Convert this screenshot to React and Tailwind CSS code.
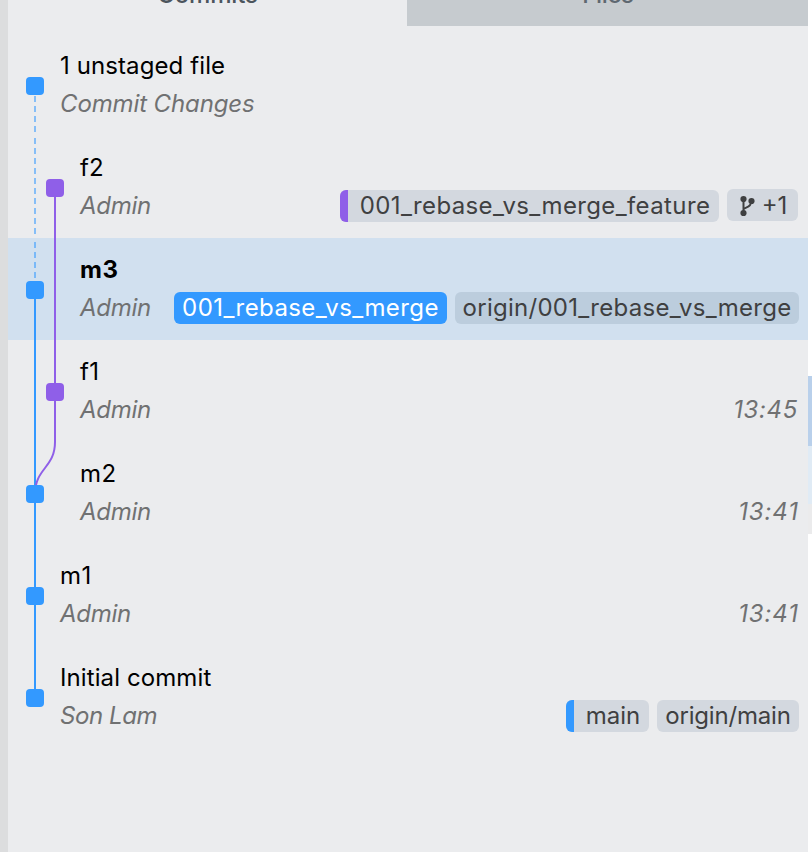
import React from "react";

const BLUE = "#3399ff";
const PURPLE = "#8f5fe8";

const commits = [
  { title: "1 unstaged file", titleClass: "tracking-[0.1px]", author: "Commit Changes", authorClass: "tracking-[-0.12px]", indent: "pl-[52px]" },
  {
    title: "f2",
    author: "Admin",
    indent: "pl-[72px]",
    refs: [
      { label: "001_rebase_vs_merge_feature", box: "w-[379px] tracking-[0.38px] bg-[#d3d8df]", bar: "bg-[#8f5fe8]", color: "text-[#3f4041]" },
      { label: "+1", box: "w-[71px] mr-px -translate-y-px bg-[#d3d8df]", icon: true, color: "text-[#3f4041]" },
    ],
  },
  {
    title: "m3",
    titleClass: "font-bold tracking-[0.5px]",
    author: "Admin",
    indent: "pl-[72px]",
    selected: true,
    refs: [
      { label: "001_rebase_vs_merge", box: "w-[273px] tracking-[0.42px] bg-[#3399ff]", color: "text-white" },
      { label: "origin/001_rebase_vs_merge", box: "w-[344px] tracking-[0.27px] bg-[#bccddd]", color: "text-[#3f4041]" },
    ],
  },
  { title: "f1", titleClass: "tracking-[0.4px]", author: "Admin", indent: "pl-[72px]", time: "13:45", timeClass: "tracking-[0.65px] mr-px" },
  { title: "m2", titleClass: "tracking-[0.4px]", author: "Admin", indent: "pl-[72px]", time: "13:41", timeClass: "tracking-[0.9px]" },
  { title: "m1", titleClass: "tracking-[1.5px]", author: "Admin", indent: "pl-[52px]", time: "13:41", timeClass: "tracking-[0.9px]" },
  {
    title: "Initial commit",
    titleClass: "tracking-[0.1px]",
    author: "Son Lam",
    authorClass: "tracking-[-0.42px]",
    indent: "pl-[52px]",
    refs: [
      { label: "main", box: "w-[83px] bg-[#d3d8df]", bar: "bg-[#3399ff]", color: "text-[#3f4041]" },
      { label: "origin/main", box: "w-[142px] tracking-[-0.18px] bg-[#d3d8df]", color: "text-[#3f4041]" },
    ],
  },
];

function BranchIcon() {
  return (
    <svg width="16" height="22" viewBox="0 0 16 22" fill="none" className="shrink-0 translate-x-[0.5px] translate-y-px">
      <path d="M4 4V18M4 14.2C6 12 11.6 12.8 12 6" stroke="#3f4041" strokeWidth="2" />
      <circle cx="4" cy="4" r="3.1" fill="#3f4041" />
      <circle cx="12" cy="6" r="3.1" fill="#3f4041" />
      <circle cx="4" cy="18" r="3.1" fill="#3f4041" />
    </svg>
  );
}

function RefTag({ tag }) {
  return (
    <div className={`flex h-8 shrink-0 items-center overflow-hidden rounded-[6px] ${tag.box} ${tag.color}`}>
      {tag.bar && <div className={`h-full w-2 shrink-0 ${tag.bar}`} />}
      <div className={`flex flex-1 items-center justify-center whitespace-nowrap leading-8 ${tag.icon ? "gap-[7px] pl-px" : ""}`}>
        {tag.icon && <BranchIcon />}
        <span className={tag.bar ? "pl-[3px]" : tag.icon ? "translate-y-px inline-block" : ""}>{tag.label}</span>
      </div>
    </div>
  );
}

function CommitRow({ commit }) {
  return (
    <div className={`h-[102px] pt-[14px] pr-[9px] ${commit.indent} ${commit.selected ? "bg-[#d1e0ef]" : ""}`}>
      <div className={`h-[36px] leading-[36px] text-black ${commit.titleClass || ""}`}>{commit.title}</div>
      <div className="mt-1 flex h-8 items-center justify-between text-[#707172]">
        <span className={`italic leading-8 ${commit.authorClass || "tracking-[-0.3px]"}`}>{commit.author}</span>
        {commit.time && <span className={`italic leading-8 ${commit.timeClass}`}>{commit.time}</span>}
        {commit.refs && (
          <div className="flex gap-2">
            {commit.refs.map((tag) => (
              <RefTag key={tag.label} tag={tag} />
            ))}
          </div>
        )}
      </div>
    </div>
  );
}

const nodes = [
  [27, 52, BLUE],
  [47, 154, PURPLE],
  [27, 256, BLUE],
  [47, 358, PURPLE],
  [27, 460, BLUE],
  [27, 562, BLUE],
  [27, 664, BLUE],
];

function Graph() {
  return (
    <svg className="pointer-events-none absolute left-0 top-0" width="64" height="714" fill="none" strokeWidth="2">
      <g stroke={BLUE} strokeOpacity="0.55" strokeDasharray="6 4">
        <path d="M27 62V98" />
        <path d="M27 104V200" />
        <path d="M27 208V244" />
      </g>
      <path d="M27 256V664" stroke={BLUE} />
      <path d="M47 154V408C47 434 27 434 27 460" stroke={PURPLE} />
      {nodes.map(([x, y, color]) => (
        <rect key={y} x={x - 9} y={y - 9} width="18" height="18" rx="4" fill={color} />
      ))}
    </svg>
  );
}

export default function App() {
  return (
    <div className="flex h-[852px] w-[812px] overflow-hidden bg-[#ebecee] font-['Inter','Liberation_Sans',sans-serif] text-[24px]">
      <div className="w-2 shrink-0 bg-[#dcddde]" />
      <main className="w-[800px] shrink-0">
        <div className="flex h-[26px] overflow-hidden font-medium">
          <div className="w-[399px] text-center text-[#4c555d]">
            <div className="-mt-[21px] tracking-[-0.2px] leading-8">Commits</div>
          </div>
          <div className="flex-1 bg-[#c6cbcf] text-center text-[#5e6871]">
            <div className="-mt-[21px] pl-px tracking-[-0.4px] leading-8">Files</div>
          </div>
        </div>
        <div className="relative mt-2">
          {commits.map((commit) => (
            <CommitRow key={commit.title} commit={commit} />
          ))}
          <Graph />
        </div>
      </main>
      <aside className="flex w-1 shrink-0 flex-col bg-white pt-[376px]">
        <div className="h-[70px] bg-[#b9d0eb]" />
        <div className="h-[58px] bg-[#e0ebf5]" />
        <div className="h-[30px] bg-[#ebebec]" />
      </aside>
    </div>
  );
}
